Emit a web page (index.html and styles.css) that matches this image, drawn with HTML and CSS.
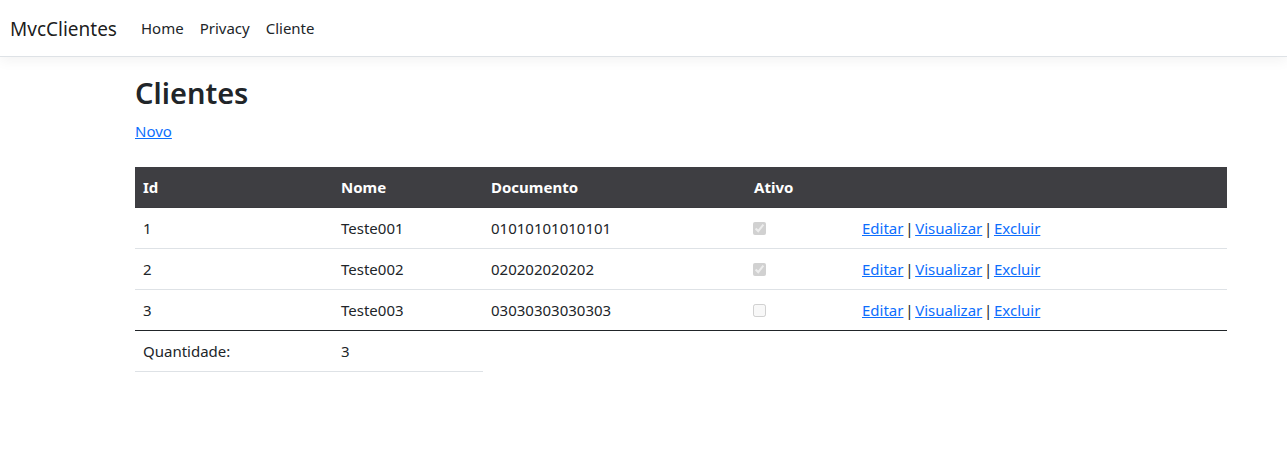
FILE: index.html
```html
<!DOCTYPE html>
<html lang="pt-br">
<head>
<meta charset="utf-8">
<title>Clientes - MvcClientes</title>
<link rel="stylesheet" href="styles.css">
</head>
<body>
<header class="site-header">
  <nav class="navbar">
    <a class="brand" href="#">MvcClientes</a>
    <ul class="nav">
      <li><a class="nav-link" href="#">Home</a></li>
      <li><a class="nav-link" href="#">Privacy</a></li>
      <li><a class="nav-link" href="#">Cliente</a></li>
    </ul>
  </nav>
</header>
<main class="container">
  <h1 class="title">Clientes</h1>
  <p class="actions"><a href="#">Novo</a></p>
  <table class="table">
    <colgroup>
      <col class="c-id"><col class="c-nome"><col class="c-doc"><col class="c-ativo"><col class="c-acoes">
    </colgroup>
    <thead>
      <tr><th>Id</th><th>Nome</th><th>Documento</th><th>Ativo</th><th></th></tr>
    </thead>
    <tbody>
      <tr class="first">
        <td>1</td><td>Teste001</td><td>01010101010101</td>
        <td><input class="check" type="checkbox" checked disabled></td>
        <td class="row-actions"><a href="#">Editar</a> | <a href="#">Visualizar</a> | <a href="#">Excluir</a></td>
      </tr>
      <tr>
        <td>2</td><td>Teste002</td><td>020202020202</td>
        <td><input class="check" type="checkbox" checked disabled></td>
        <td class="row-actions"><a href="#">Editar</a> | <a href="#">Visualizar</a> | <a href="#">Excluir</a></td>
      </tr>
      <tr class="last">
        <td>3</td><td>Teste003</td><td>03030303030303</td>
        <td><input class="check" type="checkbox" disabled></td>
        <td class="row-actions"><a href="#">Editar</a> | <a href="#">Visualizar</a> | <a href="#">Excluir</a></td>
      </tr>
    </tbody>
    <tfoot>
      <tr><td>Quantidade:</td><td>3</td></tr>
    </tfoot>
  </table>
</main>
</body>
</html>
```
FILE: styles.css
```css
html, body {
  margin: 0;
  padding: 0;
  background: #fff;
}
body {
  font-family: "Noto Sans", "Open Sans", sans-serif;
  font-size: 15px;
  line-height: 24px;
  color: #212529;
}
a {
  color: #0d6efd;
}
.site-header {
  position: relative;
}
.navbar {
  display: flex;
  align-items: center;
  height: 56px;
  padding: 0 9px 0 10px;
  border-bottom: 1px solid #dee2e6;
  box-shadow: 0 4px 12px rgba(0, 0, 0, 0.05);
  background: #fff;
}
.brand {
  font-size: 19px;
  line-height: 30px;
  color: rgba(0, 0, 0, 0.9);
  text-decoration: none;
  margin-right: 16px;
  padding-top: 1px;
}
.nav {
  display: flex;
  list-style: none;
  margin: 0;
  padding: 0;
}
.nav-link {
  display: block;
  padding: 8px;
  color: #212529;
  text-decoration: none;
}
.container {
  padding: 16px 0 16px 135px;
}
.title {
  margin: 0 0 7px;
  padding-top: 1px;
  font-size: 29px;
  line-height: 38px;
  font-weight: 600;
}
.actions {
  margin: 0 0 24px;
  height: 24px;
}
.table {
  width: 1092px;
  border-collapse: collapse;
  table-layout: fixed;
}
.c-id { width: 198px; }
.c-nome { width: 150px; }
.c-doc { width: 263px; }
.c-ativo { width: 108px; }
.c-acoes { width: 373px; }
.table th,
.table td {
  padding: 8px;
  text-align: left;
  vertical-align: top;
  line-height: 24px;
}
.table thead th {
  background: #3e3e42;
  color: #fff;
  font-weight: 700;
}
.table tbody td {
  border-bottom: 1px solid #dee2e6;
}
.table tbody tr.first td {
  border-top: 1px solid #3a3a3e;
}
.table tbody tr.last td {
  border-bottom: 1px solid #212529;
}
.table tfoot td {
  border-bottom: 1px solid #dee2e6;
}
.row-actions {
  word-spacing: -2.2px;
}
.check {
  margin: 6px 0 0 -1px;
  width: 13px;
  height: 13px;
  vertical-align: top;
}
```
